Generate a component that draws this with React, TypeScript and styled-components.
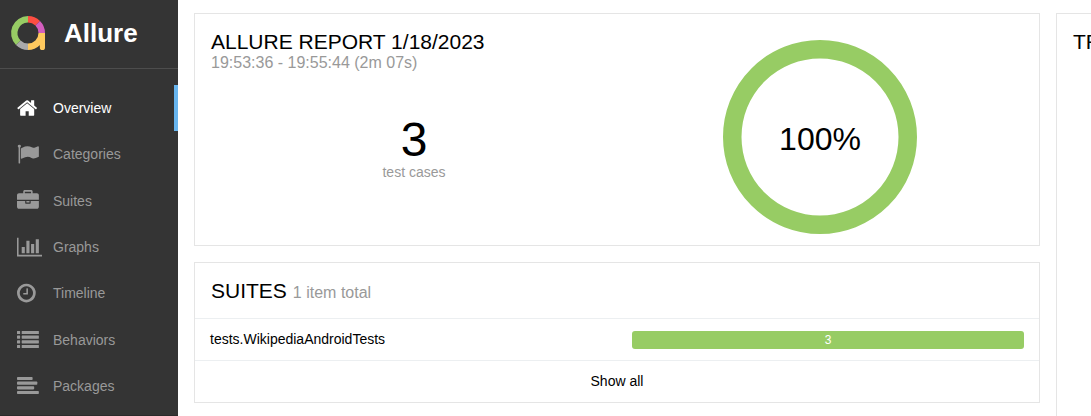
import React from "react";
import styled, { createGlobalStyle } from "styled-components";

const GlobalStyle = createGlobalStyle`
  *, *::before, *::after { box-sizing: border-box; }
  body {
    margin: 0;
    background: #fff;
    color: #000;
    font-family: "Liberation Sans", Arial, sans-serif;
    font-size: 14px;
    line-height: 20px;
    overflow: hidden;
  }
`;

const Page = styled.div`
  display: flex;
  height: 100vh;
`;

const Sidebar = styled.aside`
  flex: none;
  width: 178px;
  display: flex;
  flex-direction: column;
  background: #343434;
  border-bottom: 1px solid #2b2b2b;
`;

const Brand = styled.a`
  display: flex;
  align-items: center;
  gap: 16px;
  height: 69px;
  padding: 0 10px 2px;
  border-bottom: 1px solid #4d4d4d;
  color: #fff;
  font-size: 26px;
  font-weight: 700;
  line-height: 32px;
  text-decoration: none;
`;

const Logo = styled.svg`
  flex: none;
  width: 38px;
  height: 36px;
`;

const Nav = styled.ul`
  flex: 1;
  display: flex;
  flex-direction: column;
  margin: 0;
  padding: 16px 0 6px;
  list-style: none;
`;

const NavItem = styled.li`
  flex: 1;
  display: flex;
  min-height: 46px;
  max-height: 48px;
`;

const NavLink = styled.a<{ $active?: boolean }>`
  flex: 1;
  display: flex;
  align-items: center;
  gap: 11px;
  padding-left: 17px;
  border-right: 4px solid ${(p) => (p.$active ? "#68b5ef" : "transparent")};
  color: ${(p) => (p.$active ? "#fff" : "#999")};
  text-decoration: none;
`;

const IconBox = styled.svg`
  flex: none;
  width: 25px;
  height: 22px;
  fill: currentColor;
`;

const Main = styled.main`
  flex: 1;
  min-width: 0;
  display: grid;
  grid-template-columns: minmax(0, 1fr) 35px;
  gap: 16px;
  padding: 13px 0 0 16px;
`;

const Column = styled.div`
  display: flex;
  flex-direction: column;
  gap: 16px;
  min-width: 0;
`;

const Widget = styled.section`
  border: 1px solid #e5e5e5;
  background: #fff;
`;

const CutWidget = styled(Widget)`
  border-right: 0;
  border-bottom: 0;
  padding: 16px 0 0 16px;
  overflow: hidden;
  white-space: nowrap;
`;

const Title = styled.h2`
  margin: 0;
  font-size: 21px;
  font-weight: 400;
  line-height: 24px;
  text-transform: uppercase;
`;

const Muted = styled.span`
  display: block;
  color: #999;
  font-size: 16px;
  line-height: 18px;
`;

const Summary = styled(Widget)`
  display: grid;
  grid-template-columns: 1fr 1fr;
  padding: 16px 16px 11px;
`;

const Splash = styled.div`
  margin-top: 44px;
  text-align: center;
`;

const Count = styled.div`
  font-size: 48px;
  line-height: 48px;
`;

const CountLabel = styled.div`
  color: #999;
  line-height: 16px;
`;

const ChartCell = styled.div`
  display: flex;
  justify-content: center;
  padding-top: 10px;
`;

const Donut = styled.svg`
  width: 194px;
  height: 194px;
  font-size: 32px;
`;

const SuitesHeader = styled.header`
  display: flex;
  align-items: baseline;
  gap: 6px;
  padding: 16px 16px 15px;
`;

const Row = styled.a`
  display: grid;
  grid-template-columns: 1fr 1fr;
  column-gap: 30px;
  align-items: end;
  padding: 10px 15px 11px;
  border-top: 1px solid #eceff1;
  color: #000;
  text-decoration: none;
`;

const ShowAll = styled(Row)`
  display: block;
  text-align: center;
`;

const Bar = styled.span`
  height: 18px;
  border-radius: 3px;
  background: #97cc64;
  color: #fff;
  font-size: 12px;
  line-height: 18px;
  text-align: center;
`;

const List = (widths: number[], bullets: boolean) =>
  widths.map((w, i) => (
    <React.Fragment key={i}>
      {bullets && <rect x="0" y={150 + i * 384} width="256" height="256" rx="32" />}
      <rect x={bullets ? 384 : 0} y={150 + i * 384} width={w} height="256" rx={bullets ? 32 : 64} />
    </React.Fragment>
  ));

const items: { label: string; offset?: number; icon: React.ReactNode }[] = [
  {
    label: "Overview",
    offset: 64,
    icon: (
      <path d="M1472 992v480q0 26-19 45t-45 19h-384v-384h-256v384h-384q-26 0-45-19t-19-45v-480q0-1 .5-3t.5-3l575-474 575 474q1 2 1 6zm223-69l-62 74q-8 9-21 11h-3q-13 0-21-7l-692-577-692 577q-12 8-24 7-13-2-21-11l-62-74q-8-10-7-23.5t11-21.5l719-599q32-26 76-26t76 26l244 204v-195q0-14 9-23t23-9h192q14 0 23 9t9 23v408l219 182q10 8 11 21.5t-7 23.5z" />
    ),
  },
  {
    label: "Categories",
    icon: (
      <path d="M320 256q0 72-64 110v1266q0 13-9.5 22.5t-22.5 9.5h-64q-13 0-22.5-9.5t-9.5-22.5v-1266q-64-38-64-110 0-53 37.5-90.5t90.5-37.5 90.5 37.5 37.5 90.5zm1472 64v763q0 25-12.5 38.5t-39.5 27.5q-215 116-369 116-61 0-123.5-22t-108.5-48-115.5-48-142.5-22q-192 0-464 146-17 9-33 9-26 0-45-19t-19-45v-742q0-32 31-55 21-14 79-43 236-120 421-120 107 0 200 29t219 88q38 19 88 19 54 0 117.5-21t110-47 88-47 54.5-21q26 0 45 19t19 45z" />
    ),
  },
  {
    label: "Suites",
    icon: (
      <path d="M640 256h512v-128h-512v128zm1152 640v480q0 66-47 113t-113 47h-1472q-66 0-113-47t-47-113v-480h672v160q0 26 19 45t45 19h320q26 0 45-19t19-45v-160h672zm-768 0v128h-256v-128h256zm768-480v384h-1792v-384q0-66 47-113t113-47h352v-160q0-40 28-68t68-28h576q40 0 68 28t28 68v160h352q66 0 113 47t47 113z" />
    ),
  },
  {
    label: "Graphs",
    icon: (
      <path d="M640 896v512h-256v-512h256zm384-512v1024h-256v-1024h256zm1024 1152v128h-2048v-1536h128v1408h1920zm-640-896v768h-256v-768h256zm384-384v1152h-256v-1152h256z" />
    ),
  },
  {
    label: "Timeline",
    offset: 128,
    icon: (
      <path d="M1024 544v448q0 14-9 23t-23 9h-320q-14 0-23-9t-9-23v-64q0-14 9-23t23-9h224v-352q0-14 9-23t23-9h64q14 0 23 9t9 23zm416 352q0-148-73-273t-198-198-273-73-273 73-198 198-73 273 73 273 198 198 273 73 273-73 198-198 73-273zm224 0q0 209-103 385.5t-279.5 279.5-385.5 103-385.5-103-279.5-279.5-103-385.5 103-385.5 279.5-279.5 385.5-103 385.5 103 279.5 279.5 103 385.5z" />
    ),
  },
  { label: "Behaviors", icon: List([1408, 1408, 1408, 1408], true) },
  { label: "Packages", icon: List([1280, 1664, 1408, 1792], false) },
];

export default function App() {
  return (
    <Page>
      <GlobalStyle />
      <Sidebar>
        <Brand href="#">
          <Logo viewBox="0 0 38 36" fill="none" strokeWidth="6.5" aria-hidden="true">
            <path d="M8.3 27.7A13.75 13.75 0 0 1 18 4.250" stroke="#97cc64" />
            <path d="M18 4.250A13.75 13.75 0 0 1 27.700 8.300" stroke="#fd4e42" />
            <path d="M27.700 8.300A13.75 13.75 0 0 1 31.750 18" stroke="#d35ebe" />
            <path d="M8.3 27.7A13.75 13.75 0 0 0 18 31.750" stroke="#aaa" />
            <path d="M18 31.750A13.75 13.75 0 0 0 31.750 18" stroke="#ffc95e" />
            <path d="M29 18h6v14.500a2.600 2.600 0 0 1-5.200 0V30l-1.500-3z" fill="#ffc95e" stroke="none" />
          </Logo>
          Allure
        </Brand>
        <Nav>
          {items.map((item, i) => (
            <NavItem key={item.label}>
              <NavLink href={`#${item.label.toLowerCase()}`} $active={i === 0}>
                <IconBox viewBox={`${item.offset ?? 0} 0 2048 1792`} preserveAspectRatio="xMinYMid meet" aria-hidden="true">
                  {item.icon}
                </IconBox>
                {item.label}
              </NavLink>
            </NavItem>
          ))}
        </Nav>
      </Sidebar>
      <Main>
        <Column>
          <Summary>
            <div>
              <Title>Allure Report 1/18/2023</Title>
              <Muted>19:53:36 - 19:55:44 (2m 07s)</Muted>
              <Splash>
                <Count>3</Count>
                <CountLabel>test cases</CountLabel>
              </Splash>
            </div>
            <ChartCell>
              <Donut viewBox="0 0 194 194" role="img" aria-label="100% passed">
                <circle cx="97" cy="97" r="87.75" fill="none" stroke="#97cc64" strokeWidth="18.5" />
                <text x="97" y="110" textAnchor="middle">
                  100%
                </text>
              </Donut>
            </ChartCell>
          </Summary>
          <Widget>
            <SuitesHeader>
              <Title>Suites</Title>
              <Muted>1 item total</Muted>
            </SuitesHeader>
            <Row href="#suites">
              <span>tests.WikipediaAndroidTests</span>
              <Bar>3</Bar>
            </Row>
            <ShowAll href="#suites">Show all</ShowAll>
          </Widget>
        </Column>
        <CutWidget>
          <Title>Trend</Title>
        </CutWidget>
      </Main>
    </Page>
  );
}
